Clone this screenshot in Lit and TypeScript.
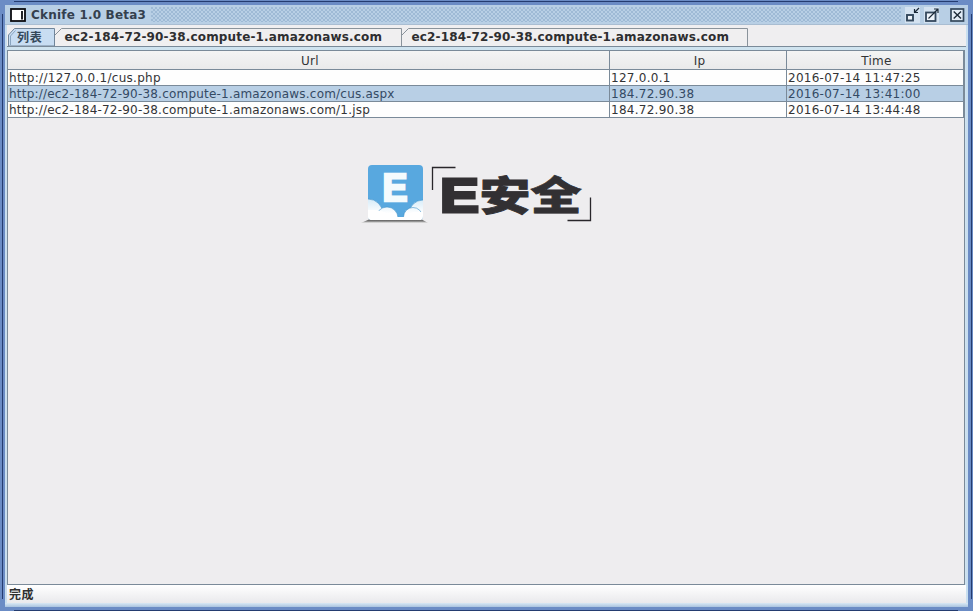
import { LitElement, html, css, svg } from "lit";
import { customElement } from "lit/decorators.js";
import { classMap } from "lit/directives/class-map.js";

const HOST = "ec2-184-72-90-38.compute-1.amazonaws.com";

const ROWS = [
  { url: "http://127.0.0.1/cus.php", ip: "127.0.0.1", time: "2016-07-14 11:47:25", short: true },
  { url: `http://${HOST}/cus.aspx`, ip: "184.72.90.38", time: "2016-07-14 13:41:00", selected: true },
  { url: `http://${HOST}/1.jsp`, ip: "184.72.90.38", time: "2016-07-14 13:44:48" },
];

@customElement("title-bar")
export class TitleBar extends LitElement {
  static styles = css`
    :host {
      display: flex;
      align-items: center;
      height: 20px;
      background: #b8cfe5;
      padding: 0 3px 0 5px;
      color: #34404e;
      box-sizing: border-box;
      border-bottom: 1px solid #a9bdd2;
    }
    svg { display: block; flex: none; }
    .title {
      font: bold 12px "DejaVu Sans", sans-serif;
      letter-spacing: 0.2px;
      white-space: nowrap;
      width: 115px;
      margin-left: 4px;
    }
    .grip {
      flex: 1;
      height: 15px;
      margin: 0 4px 0 5px;
      background-image: radial-gradient(circle at 1px 1px, #8dabca 0.5px, transparent 1px),
        radial-gradient(circle at 3px 3px, #8dabca 0.5px, transparent 1px);
      background-size: 4px 4px;
    }
    .buttons { display: flex; align-items: center; }
    .max { margin-left: 3px; }
    .close { margin-left: 10px; }
  `;
  render() {
    return html`
      <svg width="17" height="16" viewBox="0 0 17 16">
        <rect x="1" y="2" width="14" height="12" fill="#fff" stroke="#0c0c10" stroke-width="1.8" />
        <path d="M12 4V12.500" stroke="#0c0c10" stroke-width="1.8" />
      </svg>
      <span class="title">Cknife 1.0 Beta3</span>
      <span class="grip"></span>
      <span class="buttons">
        <svg width="16" height="16" viewBox="0 0 16 16">
          <rect width="15" height="16" fill="#d4e2f0" />
          <rect x="2" y="8" width="6" height="5.500" fill="#eef4fa" stroke="#34485c" stroke-width="1.9" />
          <path d="M14 1L10 5M9.500 2V5.500H13" fill="none" stroke="#1c2a38" stroke-width="1.2" />
        </svg>
        <svg class="max" width="16" height="16" viewBox="0 0 16 16">
          <rect width="15" height="16" fill="#d4e2f0" />
          <rect x="2" y="5.500" width="9.500" height="8.500" fill="#eef4fa" stroke="#34485c" stroke-width="1.8" />
          <path d="M4.500 11.500L13.500 2.500M10 2H14V6" fill="none" stroke="#1c2a38" stroke-width="1.2" />
        </svg>
        <svg class="close" width="15" height="16" viewBox="0 0 15 16">
          <rect x="1" y="2" width="12.500" height="12" fill="#e3edf7" stroke="#34485c" stroke-width="1.7" />
          <path d="M3.700 4.500L11 11.500M11 4.500L3.700 11.500" stroke="#1c2a38" stroke-width="1.4" />
        </svg>
      </span>
    `;
  }
}

@customElement("tab-strip")
export class TabStrip extends LitElement {
  static styles = css`
    :host {
      display: flex;
      height: 21px;
      padding-top: 3px;
      box-sizing: border-box;
      background: #efeef0;
      font: bold 12px "DejaVu Sans", "Noto Sans CJK SC", sans-serif;
      color: #2e2e30;
    }
    .tab { position: relative; height: 18px; }
    .shape { position: absolute; inset: 0; display: block; }
    .label {
      position: relative;
      display: block;
      line-height: 18px;
      padding-left: 9.5px;
      letter-spacing: 0.16px;
      white-space: nowrap;
    }
    .active .label { padding-left: 10px; letter-spacing: 0.8px; color: #34485a; line-height: 20px; }
    .first { width: 48px; }
    .host { width: 347px; }
  `;
  private tab(label: string, width: number, active: boolean) {
    const w = width - 0.5;
    return html`
      <div class=${classMap({ tab: true, active, first: active, host: !active })}>
        <svg class="shape" width=${width} height="18" viewBox="0 0 ${width} 18">
          ${active
            ? svg`<path d="M1.500 18V7L7.500 0.500H${w}V18Z" fill="#c8ddf2" stroke="#70859a" />
                 <path d="M3.500 17V8L8.500 2.500" fill="none" stroke="#8aa5c0" />`
            : svg`<path d="M0 18V7L6.500 0.500H${w}V18Z" fill="#f0eff0" />
                 <path d="M0 7L6.500 0.500H${w}V18" fill="none" stroke="#8a939b" />`}
        </svg>
        <span class="label">${label}</span>
      </div>
    `;
  }
  render() {
    return html`${this.tab("列表", 48, true)}${this.tab(HOST, 347, false)}${this.tab(HOST, 346, false)}`;
  }
}

@customElement("brand-mark")
export class BrandMark extends LitElement {
  static styles = css`
    :host { display: block; }
    svg { display: block; overflow: visible; }
    .word { font: 900 40px "Noto Sans CJK SC", sans-serif; fill: #323033; stroke: #323033; stroke-width: 0.8px; }
    .latin { font: bold 48px "Liberation Sans", sans-serif; stroke-width: 3px; }
    .badge { font: bold 38px "Liberation Sans", sans-serif; fill: #f4fbfd; stroke: #f4fbfd; stroke-width: 2.4px; }
  `;
  render() {
    return html`
      <svg width="232" height="64" viewBox="362 162 232 64">
        <defs>
          <linearGradient id="shade" x1="0" y1="0" x2="0" y2="1">
            <stop offset="0" stop-color="#555" /><stop offset="0.5" stop-color="#777" /><stop offset="1" stop-color="#eee" />
          </linearGradient>
          <linearGradient id="cloud" gradientUnits="userSpaceOnUse" x1="0" y1="198" x2="0" y2="220">
            <stop offset="0" stop-color="#d3eaf8" /><stop offset="0.7" stop-color="#fff" />
          </linearGradient>
          <clipPath id="tile"><rect x="368" y="165" width="55" height="55" rx="4" /></clipPath>
        </defs>
        <path d="M361 223L370 219H421L428 223Z" fill="url(#shade)" />
        <g clip-path="url(#tile)">
          <rect x="368" y="165" width="55" height="55" fill="#58a8df" />
          <g fill="url(#cloud)" stroke="#3f92ca" stroke-width="0.6">
            <circle cx="368" cy="214" r="15" />
            <circle cx="423" cy="214" r="14" />
            <circle cx="387" cy="218" r="11" />
            <circle cx="413" cy="217" r="9.500" />
          </g>
          <path d="M368 210H376L384 212L394 217H406L413 212H423V220H368Z" fill="#fff" />
        </g>
        <text class="badge" x="382.500" y="200.500" textLength="25" lengthAdjust="spacingAndGlyphs">E</text>
        <path d="M432.500 190V167.500H455.500M567.500 220.500H590.500V197.500" fill="none" stroke="#29272b" stroke-width="1.3" />
        <text class="word latin" x="440" y="211.500" textLength="39" lengthAdjust="spacingAndGlyphs">E</text>
        <text class="word" x="479.500" y="209.500" textLength="102" lengthAdjust="spacingAndGlyphs">安全</text>
      </svg>
    `;
  }
}

@customElement("shell-table")
export class ShellTable extends LitElement {
  static styles = css`
    :host { display: block; font: 12px "DejaVu Sans", sans-serif; color: #333436; }
    .row {
      display: grid;
      grid-template-columns: 602px 177px 177px;
      height: 16px;
      background: #fefefe;
    }
    .cell {
      box-sizing: border-box;
      border-right: 1px solid #7a8a99;
      border-bottom: 1px solid #7a8a99;
      padding-left: 1px;
      line-height: 17px;
      height: 16px;
      white-space: nowrap;
      overflow: hidden;
      letter-spacing: 0.27px;
    }
    .head { height: 19px; background: linear-gradient(#f4f4f4, #e9e9ea); }
    .head .cell { height: 19px; text-align: center; line-height: 21px; padding-left: 3px; }
    .selected { background: #b8cfe5; color: #344a64; }
    .url { letter-spacing: 0.205px; }
    .short .url { letter-spacing: 0.28px; }
  `;
  render() {
    return html`
      <div class="row head">
        <div class="cell">Url</div><div class="cell">Ip</div><div class="cell">Time</div>
      </div>
      ${ROWS.map(
        (r) => html`<div class=${classMap({ row: true, selected: !!r.selected, short: !!r.short })}>
          <div class="cell url">${r.url}</div><div class="cell">${r.ip}</div><div class="cell">${r.time}</div>
        </div>`
      )}
    `;
  }
}

@customElement("app-root")
export class AppRoot extends LitElement {
  static styles = css`
    :host {
      display: block;
      box-sizing: border-box;
      width: 973px;
      height: 611px;
      padding: 5px 5px 4px;
      overflow: hidden;
      background:
        linear-gradient(#243c70, #243c70) 14px 1px / 944px 1px no-repeat,
        linear-gradient(#243c70, #243c70) 14px 610px / 944px 1px no-repeat,
        linear-gradient(#243c70, #243c70) 2px 14px / 1px 585px no-repeat,
        linear-gradient(#243c70, #243c70) 971px 14px / 1px 585px no-repeat,
        #6b8cc5;
    }
    .window {
      display: flex;
      flex-direction: column;
      height: 602px;
      box-sizing: border-box;
      background: #c9dff0;
    }
    .tabs { margin: 0 2px; }
    .pane {
      flex: 1;
      margin: 0 2px;
      border-top: 1px solid #7a8a99;
      padding-top: 3px;
      background: #cfe3ef;
      min-height: 0;
      display: flex;
    }
    .list {
      flex: 1;
      border: 1px solid #7a8a99;
      background: #eeedef;
      margin-right: 1px;
    }
    .brand { margin: 44px 0 0 354px; }
    .status {
      height: 18px;
      margin: 0 2px;
      padding-left: 2px;
      background: linear-gradient(#fff, #e9e9ec);
      font: bold 12px/18px "Noto Sans CJK SC", sans-serif;
      letter-spacing: 0.5px;
      color: #2f3030;
    }
    .foot { height: 4px; background: linear-gradient(#d8e8f4, #a9c3df); }
  `;
  render() {
    return html`
      <div class="window">
        <title-bar></title-bar>
        <tab-strip class="tabs"></tab-strip>
        <div class="pane">
          <div class="list">
            <shell-table></shell-table>
            <brand-mark class="brand"></brand-mark>
          </div>
        </div>
        <div class="status">完成</div>
        <div class="foot"></div>
      </div>
    `;
  }
}
